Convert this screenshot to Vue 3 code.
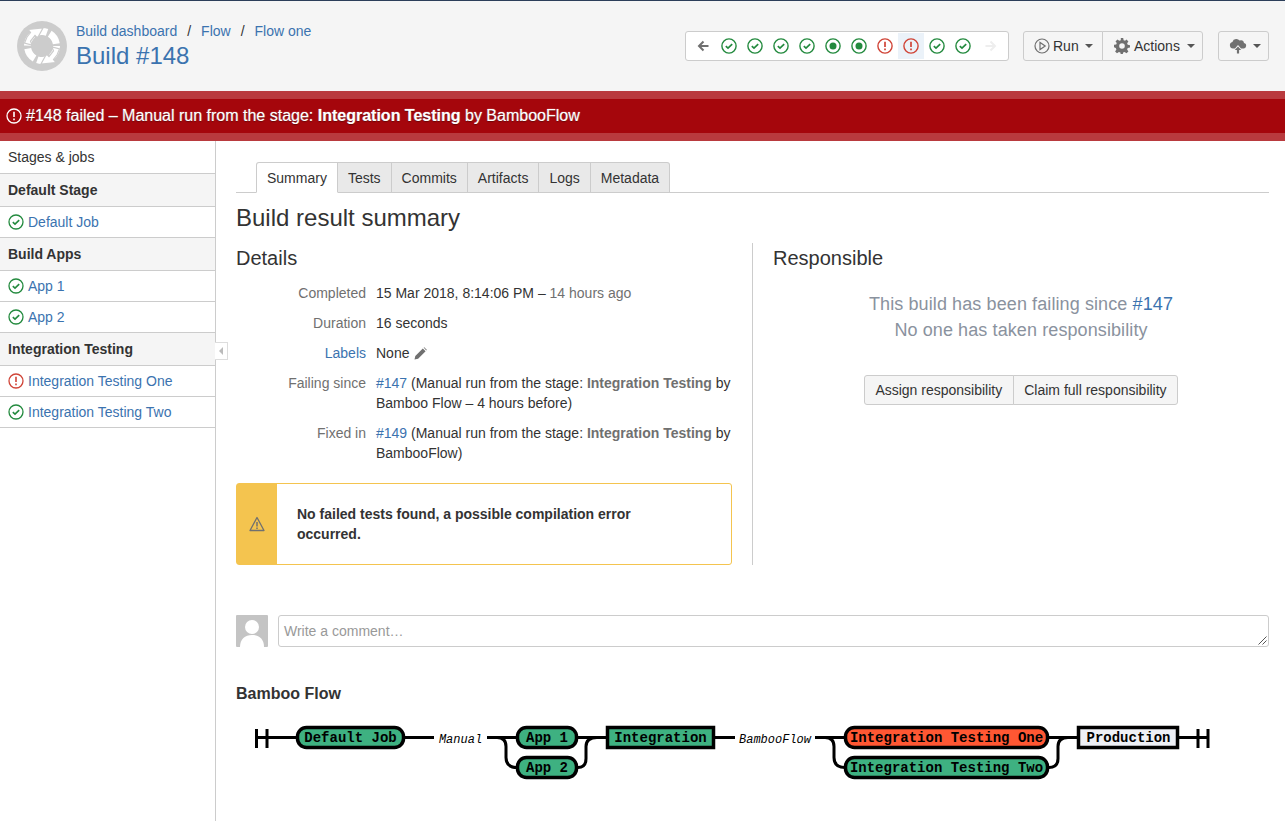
<template>
  <div class="page">
    <header class="top">
      <svg class="logo" width="50" height="50" viewBox="0 0 50 50">
        <circle cx="25" cy="25" r="25" fill="#ccc"/>
        <circle cx="25" cy="25" r="14.5" fill="none" stroke="#fff" stroke-width="7" stroke-dasharray="12.2 3"/>
        <path d="M11 8.5 26 7 20.5 17 18 14.5 13.5 20 15 24 7.5 22 10 16 13.5 11.5z" fill="#fff" stroke="#ccc" stroke-width="1.2"/>
        <path d="M11 8.5 26 7 20.5 17 18 14.5 13.5 20 15 24 7.5 22 10 16 13.5 11.5z" fill="#fff" stroke="#ccc" stroke-width="1.2" transform="rotate(180 25 25)"/>
        <circle cx="25" cy="25" r="10.5" fill="#ccc"/>
      </svg>
      <div class="title">
        <div class="crumbs">
          <a>Build dashboard</a><span class="sep">/</span><a>Flow</a><span class="sep">/</span><a>Flow one</a>
        </div>
        <h1>Build #148</h1>
      </div>
      <div class="nav-box">
        <svg class="arrow" width="12" height="12" viewBox="0 0 12 12"><path d="M11.5 6H2.5M6.5 1.5 2 6l4.5 4.5" fill="none" stroke="#707070" stroke-width="2"/></svg>
        <div class="nav-icons">
          <span v-for="(s, i) in history" :key="i" class="nav-cell" :class="{ current: i === 7 }">
            <svg width="16" height="16" viewBox="0 0 16 16">
              <circle cx="8" cy="8" r="7.1" fill="none" :stroke="s === 'bad' ? '#d04437' : '#238a3e'" stroke-width="1.4"/>
              <path v-if="s === 'ok'" d="M4.8 8.2 7 10.2l4.2-4" fill="none" stroke="#238a3e" stroke-width="1.7"/>
              <circle v-if="s === 'run'" cx="8" cy="8" r="3.5" fill="#238a3e"/>
              <path v-if="s === 'bad'" d="M8 3.8v5.2M8 10.4v1.8" fill="none" stroke="#d04437" stroke-width="1.7"/>
            </svg>
          </span>
        </div>
        <svg class="arrow" width="12" height="12" viewBox="0 0 12 12"><path d="M.5 6h9M5.5 1.5 10 6l-4.5 4.5" fill="none" stroke="#eee" stroke-width="2"/></svg>
      </div>
      <div class="btn-group">
        <button class="btn">
          <svg width="16" height="16" viewBox="0 0 16 16"><circle cx="8" cy="8" r="7" fill="none" stroke="#707070" stroke-width="1.2"/><path d="M6 4.5v7l5.2-3.5z" fill="none" stroke="#707070" stroke-width="1.2"/></svg>
          Run <i class="caret"></i>
        </button>
        <button class="btn">
          <svg width="16" height="16" viewBox="0 0 16 16"><path d="M6.8 0h2.4l.4 2.2 1.5.6L12.5 1.5l1.9 1.9-1.3 1.9.6 1.5 2.3.4v2.4l-2.3.4-.6 1.5 1.3 1.9-1.9 1.9-1.9-1.3-1.5.6-.4 2.3H6.8l-.4-2.3-1.5-.6-1.9 1.3-1.9-1.9 1.3-1.9-.6-1.5L0 9.2V6.8l2.2-.4.6-1.5-1.3-1.5 1.9-1.9 1.9 1.3 1.5-.6zM8 5.2a2.8 2.8 0 1 0 0 5.6 2.8 2.8 0 0 0 0-5.6z" fill="#707070" fill-rule="evenodd"/></svg>
          Actions <i class="caret"></i>
        </button>
      </div>
      <button class="btn single">
        <svg width="18" height="16" viewBox="0 0 18 16"><path d="M4 10.5a3.3 3.3 0 0 1-.6-6.5A4 4 0 0 1 7 1a4 4 0 0 1 3.6 1.6A3 3 0 0 1 15 5a2.8 2.8 0 0 1-1 5.5h-2L9 7l-3 3.5z" fill="#707070"/><path d="M9 8.5 5.8 12h2.1v3.5h2.2V12h2.1z" fill="#707070"/></svg>
        <i class="caret"></i>
      </button>
    </header>

    <div class="banner">
      <svg width="16" height="16" viewBox="0 0 16 16"><circle cx="8" cy="8" r="7" fill="none" stroke="#fff" stroke-width="1.3"/><path d="M8 3.8v5.2M8 10.4v1.8" stroke="#fff" stroke-width="1.6"/></svg>
      <span>#148 failed &ndash; Manual run from the stage: <b>Integration Testing</b> by BambooFlow</span>
    </div>

    <div class="body">
      <aside class="side">
        <div class="side-head">Stages &amp; jobs</div>
        <template v-for="stage in stages" :key="stage.name">
          <div class="stage">{{ stage.name }}</div>
          <a v-for="job in stage.jobs" :key="job.name" class="job">
            <svg width="16" height="16" viewBox="0 0 16 16">
              <circle cx="8" cy="8" r="7" fill="none" :stroke="job.bad ? '#d04437' : '#238a3e'" stroke-width="1.3"/>
              <path v-if="job.bad" d="M8 3.8v5.2M8 10.4v1.8" fill="none" stroke="#d04437" stroke-width="1.6"/>
              <path v-else d="M4.8 8.2 7 10.2l4.2-4" fill="none" stroke="#238a3e" stroke-width="1.6"/>
            </svg>
            {{ job.name }}
          </a>
        </template>
        <div class="collapse"><i></i></div>
      </aside>

      <main class="main">
        <ul class="tabs">
          <li v-for="(t, i) in tabs" :key="t" :class="{ active: i === 0 }">{{ t }}</li>
        </ul>
        <h2>Build result summary</h2>

        <div class="columns">
          <section class="left">
            <h3>Details</h3>
            <dl class="details">
              <dt>Completed</dt>
              <dd>15 Mar 2018, 8:14:06 PM &ndash; <span class="muted">14 hours ago</span></dd>
              <dt>Duration</dt>
              <dd>16 seconds</dd>
              <dt><a>Labels</a></dt>
              <dd class="labels">None
                <svg width="13" height="13" viewBox="0 0 13 13"><path d="M0.5 12.5l.8-3.6L8.8 1.4l2.8 2.8-7.5 7.5zM9.6.6l.6-.4 2.6 2.6-.5.7z" fill="#707070"/></svg>
              </dd>
              <dt>Failing since</dt>
              <dd class="muted"><a>#147</a> (Manual run from the stage: <b>Integration Testing</b> by Bamboo Flow &ndash; 4 hours before)</dd>
              <dt>Fixed in</dt>
              <dd class="muted"><a>#149</a> (Manual run from the stage: <b>Integration Testing</b> by BambooFlow)</dd>
            </dl>
            <div class="warning">
              <div class="warn-side">
                <svg width="16" height="16" viewBox="0 0 16 16"><path d="M8 1.5 15 14.5H1z" fill="none" stroke="#707070" stroke-width="1.3" stroke-linejoin="round"/><path d="M8 6v4.4M8 11.4v1.6" stroke="#707070" stroke-width="1.5"/></svg>
              </div>
              <p>No failed tests found, a possible compilation error occurred.</p>
            </div>
          </section>
          <section class="right">
            <h3>Responsible</h3>
            <div class="resp-text">
              <p>This build has been failing since <a>#147</a></p>
              <p>No one has taken responsibility</p>
            </div>
            <div class="resp-btns">
              <button class="btn">Assign responsibility</button>
              <button class="btn">Claim full responsibility</button>
            </div>
          </section>
        </div>

        <div class="comment">
          <svg class="avatar" width="32" height="32" viewBox="0 0 32 32">
            <rect width="32" height="32" rx="1" fill="#c4c4c4"/>
            <circle cx="16" cy="12" r="7" fill="#fff"/>
            <path d="M4 32c0-8 5-12 12-12s12 4 12 12z" fill="#fff"/>
          </svg>
          <div class="comment-box">
            Write a comment&hellip;
            <svg class="grip" width="9" height="9" viewBox="0 0 9 9"><path d="M0.5 8.5 8.5 .5M4.5 8.5l4-4" stroke="#555" stroke-width="1"/></svg>
          </div>
        </div>

        <h4>Bamboo Flow</h4>
        <svg class="flow" width="980" height="70" viewBox="250 720 980 70">
          <g fill="none" stroke="#000" stroke-width="3">
            <path d="M256.5 729v19M267 729v19M256.5 737.5H297M405 737.5h29M487 737.5h30M578 737.5h29M715 737.5h20M815 737.5h30M1049 737.5h29M1179 737.5h29M1198 729v19M1208 729v19"/>
            <path d="M497 737.5q9 0 9 9v11q0 10 11 10M578 767.5q8 0 8-9v-12q0-9 11-9"/>
            <path d="M825 737.5q9 0 9 9v11q0 10 11 10M1049 767.5q9 0 9-9v-12q0-9 10-9"/>
          </g>
          <g stroke="#000" stroke-width="3.5">
            <rect x="297.5" y="727.5" width="106" height="20" rx="9" fill="#3eb181"/>
            <rect x="517.5" y="727.5" width="59" height="20" rx="9" fill="#3eb181"/>
            <rect x="517.5" y="757.5" width="59" height="20" rx="9" fill="#3eb181"/>
            <rect x="607.5" y="727.5" width="106" height="20" fill="#3eb181"/>
            <rect x="845.5" y="727.5" width="202" height="20" rx="9" fill="#ff5733"/>
            <rect x="845.5" y="757.5" width="202" height="20" rx="9" fill="#3eb181"/>
            <rect x="1078.5" y="727.5" width="99" height="20" fill="#eef0f6"/>
          </g>
          <g class="node-text" text-anchor="middle">
            <text x="350.5" y="742">Default Job</text>
            <text x="547" y="742">App 1</text>
            <text x="547" y="772">App 2</text>
            <text x="660.5" y="742">Integration</text>
            <text x="946.5" y="742">Integration Testing One</text>
            <text x="946.5" y="772">Integration Testing Two</text>
            <text x="1128.5" y="742">Production</text>
          </g>
          <g class="edge-text" text-anchor="middle">
            <text x="460.5" y="743">Manual</text>
            <text x="775" y="743">BambooFlow</text>
          </g>
        </svg>
      </main>
    </div>
  </div>
</template>

<script setup>
const history = ['ok', 'ok', 'ok', 'ok', 'run', 'run', 'bad', 'bad', 'ok', 'ok']
const tabs = ['Summary', 'Tests', 'Commits', 'Artifacts', 'Logs', 'Metadata']
const stages = [
  { name: 'Default Stage', jobs: [{ name: 'Default Job' }] },
  { name: 'Build Apps', jobs: [{ name: 'App 1' }, { name: 'App 2' }] },
  {
    name: 'Integration Testing',
    jobs: [{ name: 'Integration Testing One', bad: true }, { name: 'Integration Testing Two' }],
  },
]
</script>

<style>
html, body { margin: 0; overflow: hidden; }
</style>

<style scoped>
.page {
  height: 821px;
  display: flex;
  flex-direction: column;
  font-family: "Liberation Sans", Arial, sans-serif;
  font-size: 14px;
  line-height: 20px;
  color: #333;
  background: #fff;
  overflow: hidden;
}
a { color: #3b73af; }
h1, h2, h3, h4, p, dl, dd, ul { margin: 0; padding: 0; }
svg { flex: none; }

.top {
  height: 91px;
  flex: none;
  box-sizing: border-box;
  border-top: 1px solid #2c3e5a;
  background: #f5f5f5;
  display: flex;
  align-items: center;
  padding: 0 16px 1px 17px;
}
.logo { margin-right: 9px; }
.title { flex: 1; padding: 1px 0; }
.crumbs { height: 20px; }
.sep { margin: 0 10px; color: #333; }
h1 { font-size: 24px; line-height: 30px; font-weight: 400; color: #3b73af; }

.nav-box {
  box-sizing: border-box;
  width: 324px;
  height: 30px;
  border: 1px solid #ccc;
  border-radius: 3px;
  background: #fff;
  display: flex;
  align-items: center;
  padding: 0 11px;
  margin-right: 14px;
}
.nav-icons { display: flex; margin-left: 7px; flex: 1; }
.nav-cell {
  width: 26px;
  height: 26px;
  display: flex;
  align-items: center;
  justify-content: center;
}
.nav-cell.current { background: #ebf2f9; }

.btn {
  box-sizing: border-box;
  height: 30px;
  border: 1px solid #ccc;
  background: #f5f5f5;
  font: inherit;
  color: #333;
  padding: 0 10.5px;
  display: inline-flex;
  align-items: center;
  gap: 3px;
}
.btn-group { display: flex; margin-right: 15px; }
.btn-group .btn { padding: 0 0 0 10px; }
.btn-group .btn:first-child { width: 80px; border-radius: 3px 0 0 3px; }
.btn-group .btn:last-child { width: 101px; margin-left: -1px; gap: 4px; padding-left: 11px; border-radius: 0 3px 3px 0; }
.btn.single { width: 51px; padding: 0 0 0 10px; border-radius: 3px; }
.caret {
  width: 0;
  height: 0;
  border: 4px solid transparent;
  border-top-color: #555;
  border-bottom: 0;
  margin-left: 3px;
}

.banner {
  box-sizing: border-box;
  height: 50px;
  flex: none;
  background: #a5060c;
  border-top: 8px solid #b93a3e;
  border-bottom: 8px solid #b93a3e;
  display: flex;
  align-items: center;
  gap: 4px;
  padding-left: 6px;
  color: #fff;
  font-size: 16px;
  text-shadow: 0 1px 1px #600, 0 0 1px #fff;
}

.body { flex: 1; display: flex; min-height: 0; }
.side {
  position: relative;
  width: 216px;
  flex: none;
  box-sizing: border-box;
  border-right: 1px solid #ccc;
}
.side-head {
  height: 33px;
  box-sizing: border-box;
  padding: 6px 8px;
  border-bottom: 1px solid #ccc;
}
.stage {
  height: 33px;
  box-sizing: border-box;
  padding: 6px 8px;
  font-weight: 700;
  background: #f5f5f5;
  border-bottom: 1px solid #ccc;
}
.job {
  height: 31px;
  box-sizing: border-box;
  padding: 0 8px;
  display: flex;
  align-items: center;
  gap: 4px;
  border-bottom: 1px solid #ccc;
}
.collapse {
  position: absolute;
  left: 215px;
  top: 201px;
  width: 13px;
  height: 18px;
  box-sizing: border-box;
  border: 1px solid #ddd;
  border-left: 0;
  background: #fff;
  display: flex;
  align-items: center;
  justify-content: center;
}
.collapse i {
  border: 4px solid transparent;
  border-right-color: #bbb;
  border-left: 0;
}

.main { flex: 1; padding: 21px 16px 0 20px; min-width: 0; }
.tabs {
  list-style: none;
  display: flex;
  height: 30px;
  padding-left: 20px;
  border-bottom: 1px solid #ccc;
}
.tabs li {
  box-sizing: border-box;
  height: 31px;
  padding: 5px 10px;
  background: #e9e9e9;
  border: 1px solid #ccc;
  border-left: 0;
}
.tabs li:last-child { border-radius: 0 3px 0 0; }
.tabs li.active {
  background: #fff;
  border-left: 1px solid #ccc;
  border-bottom-color: #fff;
  border-radius: 3px 0 0 0;
}
h2 { font-size: 24px; line-height: 30px; font-weight: 400; margin-top: 10px; }
h3 { font-size: 20px; line-height: 25px; font-weight: 400; margin-top: 3px; }

.columns { display: flex; margin-top: 10px; }
.left { width: 496px; padding-right: 20px; border-right: 1px solid #ccc; }
.right { flex: 1; padding-left: 20px; }
.details {
  display: grid;
  grid-template-columns: 130px 1fr;
  column-gap: 10px;
  row-gap: 10px;
  margin-top: 12px;
}
.details dt { text-align: right; color: #707070; }
.details dd { color: #333; }
.muted { color: #707070; }
.details dd.muted b { color: #707070; }
.labels { display: flex; align-items: center; gap: 5px; }
.warning {
  margin-top: 20px;
  height: 82px;
  box-sizing: border-box;
  border: 1px solid #f4c44f;
  border-radius: 3px;
  display: flex;
}
.warn-side {
  width: 40px;
  flex: none;
  background: #f4c44f;
  display: flex;
  align-items: center;
  justify-content: center;
}
.warning p { font-weight: 700; padding: 20px 60px 0 20px; }

.resp-text {
  margin-top: 20px;
  text-align: center;
  font-size: 18px;
  line-height: 26px;
  letter-spacing: .1px;
  color: #8a929e;
}
.resp-btns { display: flex; justify-content: center; margin-top: 32px; }
.resp-btns .btn:first-child { border-radius: 3px 0 0 3px; }
.resp-btns .btn:last-child { margin-left: -1px; border-radius: 0 3px 3px 0; }

.comment { display: flex; gap: 10px; margin-top: 50px; }
.avatar { flex: none; }
.comment-box {
  position: relative;
  flex: 1;
  height: 32px;
  box-sizing: border-box;
  border: 1px solid #ccc;
  border-radius: 3px;
  padding: 5px;
  color: #999;
}
.grip { position: absolute; right: 1px; bottom: 1px; }
h4 { font-size: 16px; line-height: 20px; font-weight: 700; margin-top: 37px; }
.flow { display: block; margin: 16px 0 0 14px; }
.node-text { font: 700 14px "Liberation Mono", "Courier New", monospace; fill: #000; }
.edge-text { font: italic 400 12px "Liberation Mono", "Courier New", monospace; fill: #000; }
</style>
